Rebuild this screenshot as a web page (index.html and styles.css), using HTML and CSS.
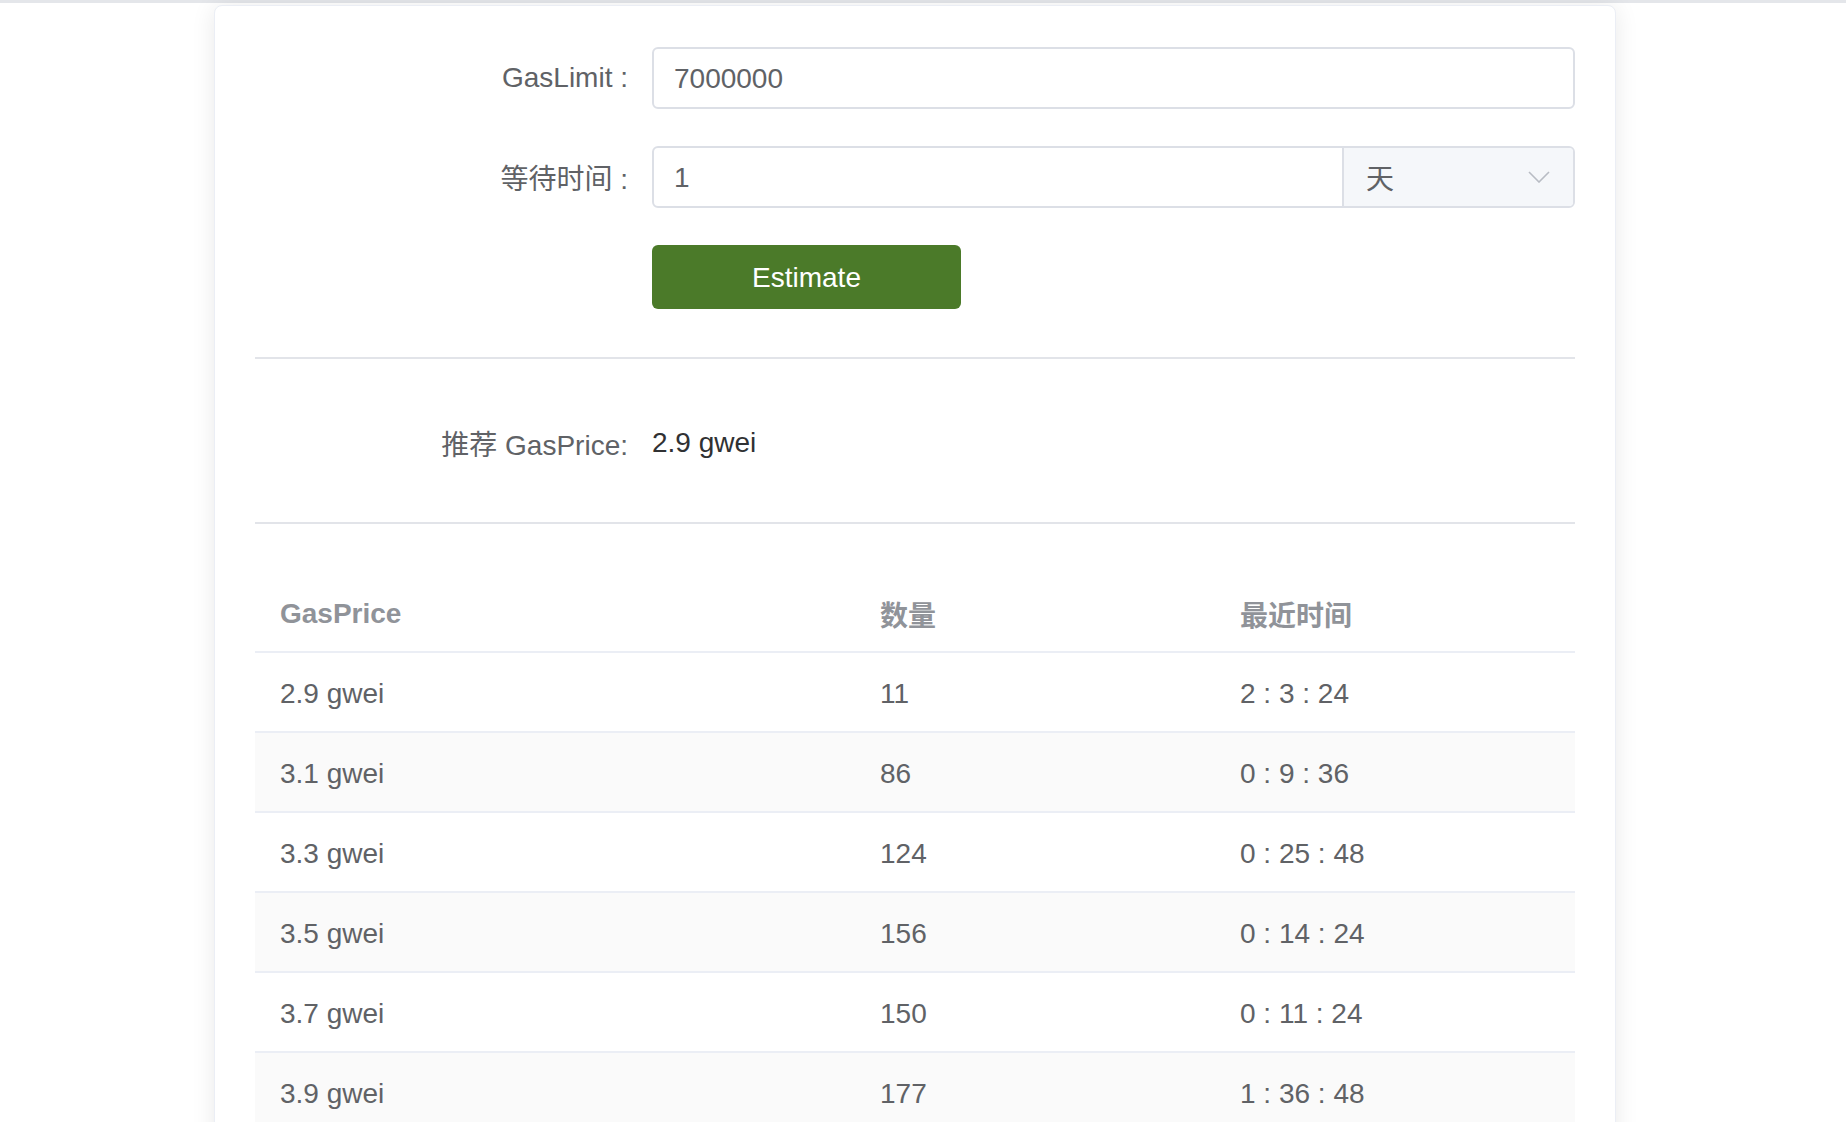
FILE: index.html
```html
<!DOCTYPE html>
<html lang="zh-CN">
<head>
<meta charset="utf-8">
<title>GasPrice Estimate</title>
<link rel="stylesheet" href="styles.css">
</head>
<body>
<div class="topbar"></div>
<div class="card">
  <form class="form">
    <div class="form-row">
      <label class="form-label">GasLimit :</label>
      <div class="input-box"><span class="input-text">7000000</span></div>
    </div>
    <div class="form-row">
      <label class="form-label">等待时间 :</label>
      <div class="input-box">
        <span class="input-text grow">1</span>
        <div class="select-part">
          <span>天</span>
          <svg class="chevron" width="22" height="12" viewBox="0 0 22 12"><path d="M1 1 L11 11 L21 1" fill="none" stroke="#b8bcc4" stroke-width="1.6"/></svg>
        </div>
      </div>
    </div>
    <div class="form-row">
      <span class="form-label"></span>
      <button type="button" class="btn">Estimate</button>
    </div>
  </form>
  <div class="divider first"></div>
  <div class="result-row">
    <span class="form-label">推荐 GasPrice:</span>
    <span class="result-value">2.9 gwei</span>
  </div>
  <div class="divider"></div>
  <table class="table">
    <thead>
      <tr><th class="c1">GasPrice</th><th class="c2">数量</th><th class="c3">最近时间</th></tr>
    </thead>
    <tbody>
      <tr><td>2.9 gwei</td><td>11</td><td>2 : 3 : 24</td></tr>
      <tr class="stripe"><td>3.1 gwei</td><td>86</td><td>0 : 9 : 36</td></tr>
      <tr><td>3.3 gwei</td><td>124</td><td>0 : 25 : 48</td></tr>
      <tr class="stripe"><td>3.5 gwei</td><td>156</td><td>0 : 14 : 24</td></tr>
      <tr><td>3.7 gwei</td><td>150</td><td>0 : 11 : 24</td></tr>
      <tr class="stripe"><td>3.9 gwei</td><td>177</td><td>1 : 36 : 48</td></tr>
    </tbody>
  </table>
</div>
</body>
</html>
```
FILE: styles.css
```css
html, body {
  margin: 0;
  padding: 0;
  background: #ffffff;
  font-family: "Liberation Sans", Arial, "Noto Sans CJK SC", sans-serif;
  font-size: 28px;
  color: #606266;
}
.topbar {
  height: 3px;
  background: #e4e6ea;
}
.card {
  margin: 2px 0 0 214px;
  width: 1402px;
  box-sizing: border-box;
  background: #fff;
  border: 1px solid #ebeef5;
  border-radius: 8px;
  box-shadow: 0 2px 24px rgba(0, 0, 0, 0.09);
  padding: 41px 40px 40px;
}
.form {
  display: flex;
  flex-direction: column;
  gap: 37px;
  margin: 0;
}
.form-row {
  display: flex;
  align-items: center;
}
.form-label {
  width: 397px;
  flex: none;
  box-sizing: border-box;
  padding-right: 24px;
  text-align: right;
  color: #606266;
}
.input-box {
  flex: 1;
  display: flex;
  align-items: stretch;
  height: 62px;
  box-sizing: border-box;
  border: 2px solid #dcdfe6;
  border-radius: 6px;
  overflow: hidden;
}
.input-text {
  display: flex;
  align-items: center;
  padding: 2px 0 0 20px;
  color: #606266;
}
.grow { flex: 1; }
.select-part {
  width: 231px;
  flex: none;
  box-sizing: border-box;
  background: #f5f7fa;
  border-left: 2px solid #dcdfe6;
  display: flex;
  align-items: center;
  justify-content: space-between;
  padding: 0 23px 0 22px;
  color: #606266;
}
.chevron { display: block; }
.btn {
  width: 309px;
  height: 64px;
  border: none;
  border-radius: 6px;
  background: #4b7a29;
  color: #ffffff;
  font-family: "Liberation Sans", Arial, sans-serif;
  font-size: 28px;
  padding: 2px 0 0;
}
.divider {
  height: 2px;
  background: #e2e4e9;
}
.divider.first { margin-top: 48px; }
.result-row {
  display: flex;
  align-items: center;
  height: 163px;
  box-sizing: border-box;
  padding-top: 4px;
}
.result-value { color: #303133; }
.table {
  width: 100%;
  margin-top: 49px;
  border-collapse: collapse;
  table-layout: fixed;
}
.table th, .table td {
  height: 75px;
  padding: 3px 0 0 25px;
  text-align: left;
  border-bottom: 2px solid #ebeef5;
  box-sizing: content-box;
}
.table th {
  color: #909399;
  font-weight: bold;
}
.c1 { width: 575px; }
.c2 { width: 335px; }
.c3 { width: auto; }
.stripe td { background: #fafafa; }
```
